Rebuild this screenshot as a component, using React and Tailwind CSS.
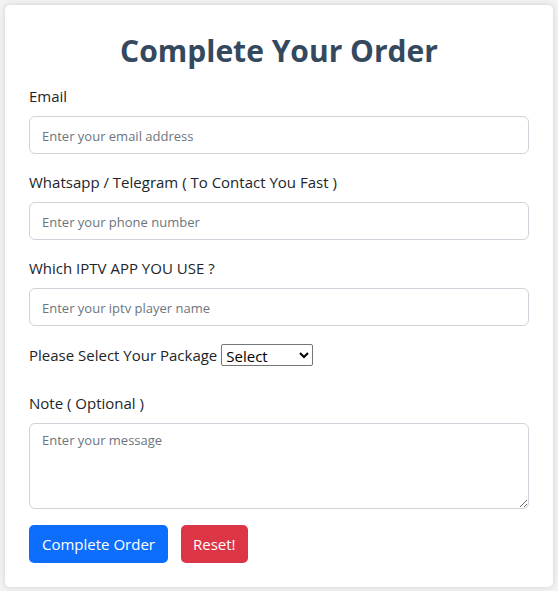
import React from 'react'

const Field = ({ label, placeholder, type = 'text' }) => (
    <div className="flex flex-col">
        <label className="text-[15px] leading-6 text-[#212529] mb-2">{label}</label>
        <input
            type={type}
            placeholder={placeholder}
            className="h-[38px] w-full rounded-[6px] border border-[#ced4da] bg-white px-3 pt-px text-[13px] text-[#212529] placeholder-[#6c757d] outline-none"
        />
    </div>
)

export default function App() {
    return (
        <div className="min-h-screen bg-[#f3f3f3] p-[5px] font-['Open_Sans',sans-serif]">
            <div className="rounded-[5px] bg-white px-6 pt-[22px] pb-6 shadow-[0_0_6px_rgba(0,0,0,0.15)]">
                <h1 className="text-center text-[30px] font-bold leading-[48px] text-[#34495e] mb-[9px]">
                    Complete Your Order
                </h1>
                <div className="flex flex-col gap-4">
                    <Field label="Email" placeholder="Enter your email address" type="email" />
                    <Field label="Whatsapp / Telegram ( To Contact You Fast )" placeholder="Enter your phone number" />
                    <Field label="Which IPTV APP YOU USE ?" placeholder="Enter your iptv player name" />
                    <div className="flex items-center text-[15px] leading-6 text-[#212529] pt-px">
                        <span>Please Select Your Package</span>
                        <select className="ml-1 h-[22px] w-[92px] rounded-[2px] border border-[#767676] bg-white text-[15px] leading-5 text-black">
                            <option>Select</option>
                            <option>1 Month</option>
                            <option>3 Months</option>
                            <option>6 Months</option>
                            <option>12 Months</option>
                        </select>
                    </div>
                    <div className="flex flex-col mt-2">
                        <label className="text-[15px] leading-6 text-[#212529] mb-2">Note ( Optional )</label>
                        <textarea
                            placeholder="Enter your message"
                            className="h-[86px] w-full rounded-[6px] border border-[#ced4da] bg-white px-3 py-[7px] text-[13px] text-[#212529] placeholder-[#6c757d] outline-none"
                        />
                    </div>
                    <div className="flex gap-[13px]">
                        <button className="h-[38px] rounded-[5px] bg-[#0d6efd] px-[13px] text-[15px] text-white">Complete Order</button>
                        <button className="h-[38px] rounded-[5px] bg-[#dc3545] px-3 text-[15px] text-white">Reset!</button>
                    </div>
                </div>
            </div>
        </div>
    )
}
